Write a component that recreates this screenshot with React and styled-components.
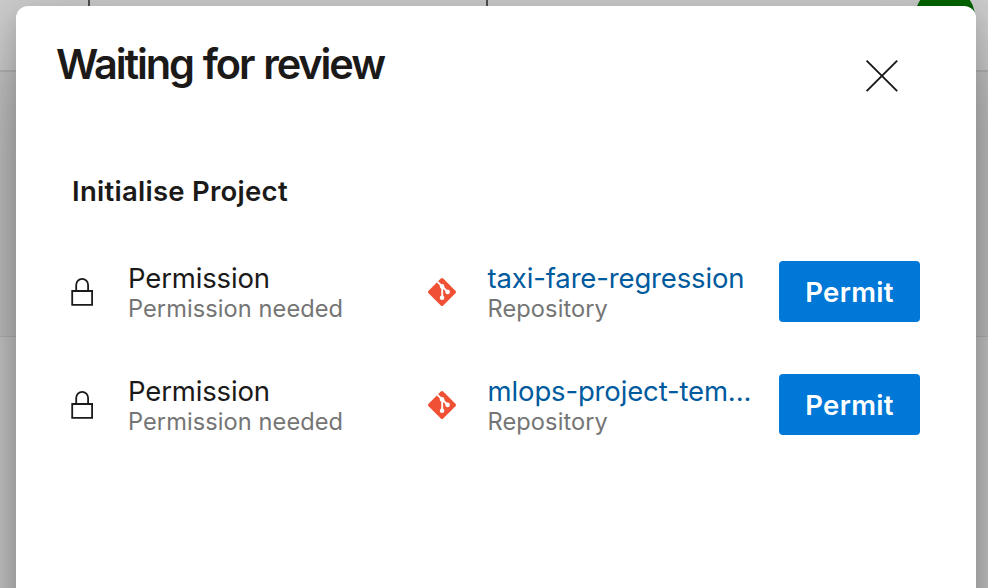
import React from "react";
import styled, { createGlobalStyle } from "styled-components";

const GlobalStyle = createGlobalStyle`
  * { box-sizing: border-box; }
  body {
    margin: 0;
    overflow: hidden;
    font-family: Inter, "Liberation Sans", sans-serif;
    color: #1b1a19;
  }
`;

const Page = styled.div`
  position: relative;
  width: 988px;
  height: 588px;
  overflow: hidden;
  display: flex;
  flex-direction: column;
  background: #cbcbcb;
`;

const TopBar = styled.div`
  height: 72px;
  flex: none;
  display: grid;
  grid-template-columns: 90px 398px 1fr 78px;
  border-bottom: 2px solid #b4b4b4;
  background: #cccccc;
`;

const TopCell = styled.div`
  height: 40px;
  border-right: ${(p) => (p.$divided ? "2px solid #505050" : "none")};
`;

const Avatar = styled.div`
  width: 60px;
  height: 60px;
  margin: -13px 0 0 5px;
  border-radius: 50%;
  background: #006500;
`;

const Band = styled.div`
  height: 265px;
  flex: none;
  background: #c4c4c4;
  border-bottom: 1px solid #b8b8b8;
`;

const Dialog = styled.section`
  position: absolute;
  left: 16px;
  top: 6px;
  width: 960px;
  height: 640px;
  padding: 32px 56px 0;
  border-radius: 12px;
  background: #fff;
  box-shadow: 0 50px 90px rgba(0, 0, 0, 0.3), 0 8px 28px rgba(0, 0, 0, 0.18);
`;

const Header = styled.header`
  display: flex;
  justify-content: space-between;
  height: 133px;
  margin: 0 20px 0 -16px;
`;

const Title = styled.h1`
  margin: 0;
  font-size: 41.5px;
  line-height: 52px;
  font-weight: 630;
  letter-spacing: -2.1px;
  word-spacing: 1.5px;
  white-space: nowrap;
`;

const CloseButton = styled.button`
  width: 36px;
  height: 36px;
  margin: 20px 0 0;
  padding: 0;
  border: 0;
  background: none;
  svg { display: block; }
`;

const Stage = styled.h2`
  margin: 0 0 48px;
  padding-top: 0;
  font-size: 27.5px;
  line-height: 40px;
  font-weight: 600;
  letter-spacing: 0.27px;
`;

const Row = styled.div`
  display: grid;
  grid-template-columns: 56px 300px 59.6px 291.4px 141px;
  align-items: center;
  height: 61px;
  margin-bottom: 52px;
`;

const LockCell = styled.div`
  height: 31px;
  svg { display: block; overflow: visible; }
`;

const GitCell = styled.div`
  height: 27px;
  svg { display: block; }
`;

const Labels = styled.div`
  padding-top: 2px;
`;

const Name = styled.div`
  font-size: 27.5px;
  line-height: 34px;
  letter-spacing: -0.15px;
  color: ${(p) => (p.$link ? "#005a9e" : "#1b1a19")};
  white-space: nowrap;
`;

const Detail = styled.div`
  font-size: 23.6px;
  line-height: 28px;
  letter-spacing: 0.08px;
  color: #757575;
  white-space: nowrap;
`;

const PermitButton = styled.button`
  width: 141px;
  height: 61px;
  padding: 2px 0 0;
  border: 0;
  border-radius: 4px;
  background: #0078d7;
  color: #fff;
  font: 630 27.5px/59px Inter, "Liberation Sans", sans-serif;
  letter-spacing: 0.3px;
`;

const CloseIcon = () => (
  <svg width="36" height="36" viewBox="0 0 36 36" fill="none" stroke="#1b1a19" strokeWidth="1.9">
    <path d="M2.6 2.6 33.2 33.2M33.2 2.6 2.6 33.2" />
  </svg>
);

const LockIcon = () => (
  <svg width="24" height="31" viewBox="0 0 24 31" fill="none" stroke="#1b1a19" strokeWidth="1.8">
    <path d="M0.2 15H20.1V28.9H0.2ZM4.2 15V9A5.95 6.1 0 0 1 16.1 9V15" />
  </svg>
);

const GitIcon = () => (
  <svg width="28" height="28" viewBox="0 0 28 28">
    <path
      fill="#f05033"
      d="M12.8.6a1.7 1.7 0 0 1 2.4 0L27.4 12.8a1.7 1.7 0 0 1 0 2.4L15.2 27.4a1.7 1.7 0 0 1-2.4 0L.6 15.2a1.7 1.7 0 0 1 0-2.4Z"
    />
    <path d="M9.3 3.6 14.2 8.5V19.5M14.2 8.5 19.7 14" fill="none" stroke="#fff" strokeWidth="1.9" />
    <g fill="#fff">
      <circle cx="14.1" cy="8.4" r="2.3" />
      <circle cx="14.1" cy="19.8" r="2.3" />
      <circle cx="19.6" cy="13.9" r="2.3" />
    </g>
  </svg>
);

const repositories = ["taxi-fare-regression", "mlops-project-tem..."];

export default function App() {
  return (
    <>
      <GlobalStyle />
      <Page>
        <TopBar>
          <TopCell $divided />
          <TopCell $divided />
          <TopCell />
          <Avatar />
        </TopBar>
        <Band />
        <Dialog role="dialog">
          <Header>
            <Title>Waiting for review</Title>
            <CloseButton aria-label="Close">
              <CloseIcon />
            </CloseButton>
          </Header>
          <Stage>Initialise Project</Stage>
          {repositories.map((name) => (
            <Row key={name}>
              <LockCell>
                <LockIcon />
              </LockCell>
              <Labels>
                <Name>Permission</Name>
                <Detail>Permission needed</Detail>
              </Labels>
              <GitCell>
                <GitIcon />
              </GitCell>
              <Labels>
                <Name $link>{name}</Name>
                <Detail>Repository</Detail>
              </Labels>
              <PermitButton>Permit</PermitButton>
            </Row>
          ))}
        </Dialog>
      </Page>
    </>
  );
}
